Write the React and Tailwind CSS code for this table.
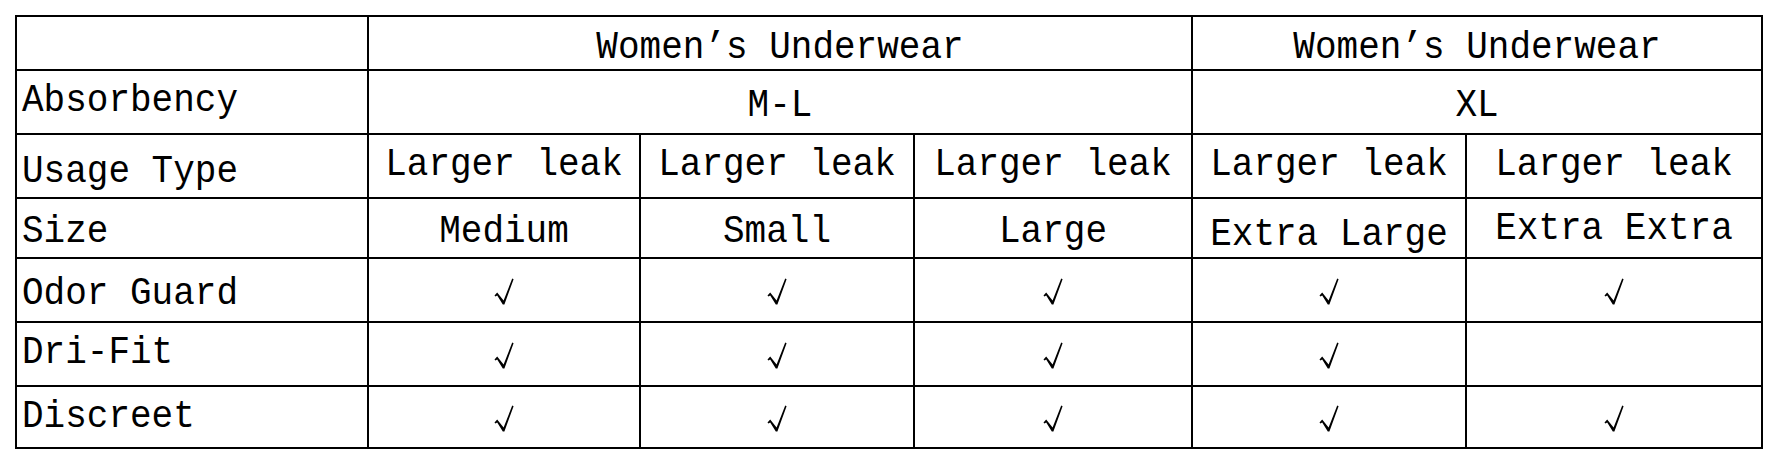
import React from "react";

const COLS = "grid-cols-[352px_272px_274px_278px_274px_296px]";

function Check() {
  return (
    <svg width="20" height="27" viewBox="0 0 20 27" className="block">
      <polygon
        points="0.5,17.6 3.2,14.6 9.6,22.6 18.2,0.6 19.6,1.2 10.4,26.4 8.8,26.4 3.2,17.6 1.4,18.6"
        fill="#000"
      />
    </svg>
  );
}

function T({ children }) {
  return (
    <span className="inline-block scale-y-110 translate-y-[2px] whitespace-pre">{children}</span>
  );
}

function Cell({ children, className = "", label = false, span = "" }) {
  return (
    <div
      className={`border-r-2 border-b-2 border-black flex items-center ${
        label ? "justify-start pl-[5px]" : "justify-center"
      } ${span} ${className}`}
    >
      {children}
    </div>
  );
}

export default function App() {
  const font = { fontFamily: '"Liberation Mono", "DejaVu Sans Mono", monospace' };
  const rows = [
    { label: "Odor Guard", vals: [1, 1, 1, 1, 1], h: "h-[64px]", lp: "pt-[4px]" },
    { label: "Dri-Fit", vals: [1, 1, 1, 1, 0], h: "h-[64px]", lp: "pb-[6px]" },
    { label: "Discreet", vals: [1, 1, 1, 1, 1], h: "h-[62px]", lp: "pb-[5px]" },
  ];
  return (
    <div className="w-[1778px] h-[464px] bg-white pt-[15px] pl-[15px]" style={font}>
      <div
        className={`grid ${COLS} border-l-2 border-t-2 border-black w-[1748px] text-[36px] leading-none text-black`}
      >
        {/* Row 1 */}
        <Cell className="h-[54px]" />
        <Cell span="col-span-3" className="h-[54px] pt-[6px]">
          <T>Women’s Underwear</T>
        </Cell>
        <Cell span="col-span-2" className="h-[54px] pt-[6px]">
          <T>Women’s Underwear</T>
        </Cell>

        {/* Row 2 */}
        <Cell label className="h-[64px] pb-[6px]"><T>Absorbency</T></Cell>
        <Cell span="col-span-3" className="h-[64px] pt-[4px]"><T>M-L</T></Cell>
        <Cell span="col-span-2" className="h-[64px] pt-[4px]"><T>XL</T></Cell>

        {/* Row 3 */}
        <Cell label className="h-[64px] pt-[7px]"><T>Usage Type</T></Cell>
        <Cell className="h-[64px] pb-[6px]"><T>Larger leak</T></Cell>
        <Cell className="h-[64px] pb-[6px]"><T>Larger leak</T></Cell>
        <Cell className="h-[64px] pb-[6px]"><T>Larger leak</T></Cell>
        <Cell className="h-[64px] pb-[6px]"><T>Larger leak</T></Cell>
        <Cell className="h-[64px] pb-[6px]"><T>Larger leak</T></Cell>

        {/* Row 4 */}
        <Cell label className="h-[60px] pt-[4px]"><T>Size</T></Cell>
        <Cell className="h-[60px] pt-[4px]"><T>Medium</T></Cell>
        <Cell className="h-[60px] pt-[4px]"><T>Small</T></Cell>
        <Cell className="h-[60px] pt-[4px]"><T>Large</T></Cell>
        <Cell className="h-[60px] pt-[10px]"><T>Extra Large</T></Cell>
        <Cell className="h-[60px] pb-[2px]"><T>Extra Extra</T></Cell>

        {rows.map((r) => (
          <React.Fragment key={r.label}>
            <Cell label className={`${r.h} ${r.lp}`}><T>{r.label}</T></Cell>
            {r.vals.map((v, i) => (
              <Cell key={i} className={`${r.h} pt-[2px]`}>
                {v ? <Check /> : null}
              </Cell>
            ))}
          </React.Fragment>
        ))}
      </div>
    </div>
  );
}
